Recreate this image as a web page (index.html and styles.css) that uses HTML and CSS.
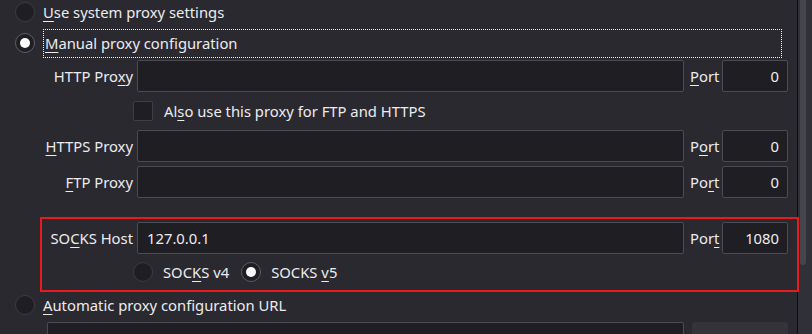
FILE: index.html
```html
<!DOCTYPE html>
<html lang="en">
<head>
    <meta charset="UTF-8">
    <meta name="viewport" content="width=device-width, initial-scale=1.0">
    <title>Connection Settings</title>
    <link rel="stylesheet" href="styles.css">
</head>
<body>
    <div class="window">
        <div class="panel">
            <label class="choice first">
                <span class="radio"></span>
                <span class="choice-text"><u>U</u>se system proxy settings</span>
            </label>
            <label class="choice manual">
                <span class="radio checked"></span>
                <span class="choice-text focused"><u>M</u>anual proxy configuration</span>
            </label>

            <div class="field-row http">
                <span class="field-label">HTTP Pro<u>x</u>y</span>
                <div class="text-input"></div>
                <span class="port-label"><u>P</u>ort</span>
                <div class="text-input port-input">0</div>
            </div>

            <label class="check-row">
                <span class="checkbox"></span>
                <span class="check-text">Al<u>s</u>o use this proxy for FTP and HTTPS</span>
            </label>

            <div class="field-row">
                <span class="field-label"><u>H</u>TTPS Proxy</span>
                <div class="text-input"></div>
                <span class="port-label">P<u>o</u>rt</span>
                <div class="text-input port-input">0</div>
            </div>
            <div class="field-row ftp">
                <span class="field-label"><u>F</u>TP Proxy</span>
                <div class="text-input"></div>
                <span class="port-label">Po<u>r</u>t</span>
                <div class="text-input port-input">0</div>
            </div>

            <div class="socks-box">
                <div class="field-row socks">
                    <span class="field-label">SO<u>C</u>KS Host</span>
                    <div class="text-input value">127.0.0.1</div>
                    <span class="port-label">Por<u>t</u></span>
                    <div class="text-input port-input">1080</div>
                </div>
                <div class="socks-versions">
                    <label class="version">
                        <span class="radio"></span>
                        <span class="version-text">SOC<u>K</u>S v4</span>
                    </label>
                    <label class="version">
                        <span class="radio checked"></span>
                        <span class="version-text">SOCKS <u>v</u>5</span>
                    </label>
                </div>
            </div>

            <label class="choice auto">
                <span class="radio"></span>
                <span class="choice-text"><u>A</u>utomatic proxy configuration URL</span>
            </label>
            <div class="url-row">
                <div class="text-input url-input"></div>
                <div class="reload-btn"></div>
            </div>
        </div>
        <div class="scrollbar">
            <div class="thumb"></div>
        </div>
    </div>
</body>
</html>
```

FILE: styles.css
```css
:root {
    --bg: #2a292f;
    --field: #1f1e23;
    --field-border: #4c4b52;
    --text: #ececef;
    --highlight: #e8191f;
}
body {
    margin: 0;
    background-color: var(--bg);
    color: var(--text);
    font-family: 'Noto Sans', 'Open Sans', sans-serif;
    font-size: 14.8px;
}
u {
    text-decoration: underline;
    text-decoration-thickness: 1px;
    text-underline-offset: 3px;
}
.window {
    display: flex;
    height: 334px;
    overflow: hidden;
}
.panel {
    width: 797px;
    flex: none;
}
.scrollbar {
    width: 14px;
    border-left: 1px solid #0e0e11;
    background-color: #2f3038;
}
.thumb {
    margin-left: 2px;
    width: 6px;
    height: 265px;
    border-radius: 0 0 3px 3px;
    background-color: #44454f;
}
.choice {
    display: flex;
    align-items: center;
    padding-left: 15px;
}
.choice.first {
    height: 23px;
}
.choice.manual {
    height: 30px;
    margin-top: 5px;
}
.choice.auto {
    height: 26px;
}
.choice-text {
    margin-left: 8px;
}
.choice-text.focused {
    flex: 1;
    margin-right: 15px;
    padding-left: 1px;
    line-height: 27px;
    border: 1px dotted #f4f4f6;
}
.radio {
    width: 20px;
    height: 20px;
    box-sizing: border-box;
    border-radius: 50%;
    border: 1px solid #3d3c44;
    background-color: var(--field);
    flex: none;
    display: flex;
    align-items: center;
    justify-content: center;
}
.radio.checked {
    border-color: #5e5d67;
}
.radio.checked::after {
    content: "";
    width: 10px;
    height: 10px;
    border-radius: 50%;
    background-color: #fbfbfe;
}
.field-row {
    display: flex;
    align-items: center;
    height: 32px;
    padding-left: 40px;
}
.field-row.http {
    margin-top: 2px;
}
.field-row.ftp {
    margin-top: 4px;
}
.field-label {
    width: 93px;
    margin-right: 4px;
    text-align: right;
    white-space: nowrap;
}
.text-input {
    width: 547px;
    height: 32px;
    box-sizing: border-box;
    border: 1px solid var(--field-border);
    border-radius: 2px;
    background-color: var(--field);
    display: flex;
    align-items: center;
    padding: 0 9px;
}
.port-label {
    width: 38px;
    padding-left: 6px;
    box-sizing: border-box;
}
.port-input {
    width: 66px;
    justify-content: flex-end;
    padding-right: 8px;
}
.check-row {
    display: flex;
    align-items: center;
    height: 38px;
    padding-left: 133px;
}
.checkbox {
    width: 20px;
    height: 20px;
    box-sizing: border-box;
    border: 1px solid #3f3e45;
    border-radius: 2px;
    background-color: var(--field);
}
.check-text {
    margin-left: 11px;
}
.socks-box {
    margin: 19px -2px 0 40px;
    border: 2px solid var(--highlight);
    position: relative;
    z-index: 1;
}
.field-row.socks {
    padding-left: 0;
    margin-top: 3px;
}
.field-row.socks .field-label {
    width: 91px;
}
.socks-versions {
    display: flex;
    align-items: center;
    height: 36px;
    padding-left: 91px;
}
.version {
    display: flex;
    align-items: center;
    margin-right: 12px;
}
.version-text {
    margin-left: 10px;
}
.url-row {
    display: flex;
    margin-top: 4px;
}
.url-input {
    margin-left: 47px;
    width: 637px;
}
.reload-btn {
    margin-left: 8px;
    width: 96px;
    height: 32px;
    border-radius: 3px;
    background-color: #34333a;
}
```
